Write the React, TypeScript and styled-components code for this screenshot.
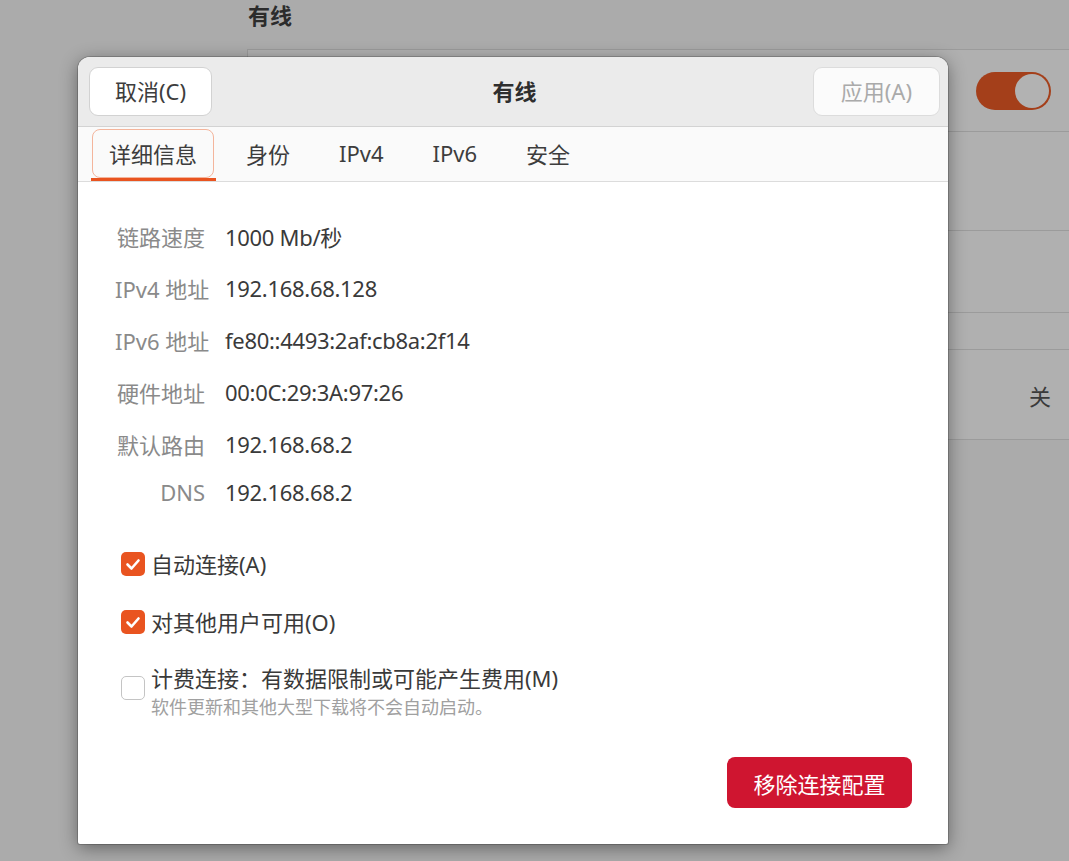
import React from "react";
import styled, { createGlobalStyle } from "styled-components";

const GlobalStyle = createGlobalStyle`
  html, body {
    margin: 0;
    padding: 0;
  }
  body {
    background: #ababab;
    font-family: "Noto Sans", "Noto Sans CJK SC", sans-serif;
    overflow: hidden;
  }
`;

const Desktop = styled.div`
  position: relative;
  width: 1069px;
  height: 861px;
  background: #ababab;
  overflow: hidden;
`;

// dimmed settings page behind the dialog
const Page = styled.div`
  display: flex;
  flex-direction: column;
  padding-left: 247px;
`;

const PageTitle = styled.div`
  height: 30px;
  line-height: 30px;
  padding-left: 1px;
  margin-bottom: 19px;
  font-size: 22px;
  font-weight: 700;
  color: #2c2c2c;
`;

const List = styled.div`
  width: 850px;
  background: #b0b0b0;
  border-top: 1px solid #9b9b9b;
  border-left: 1px solid #9b9b9b;
  display: flex;
  flex-direction: column;
`;

interface ListRowProps {
  h: number;
}
const ListRow = styled.div<ListRowProps>`
  height: ${p => p.h}px;
  border-bottom: 1px solid #9b9b9b;
  display: flex;
  align-items: center;
  justify-content: flex-end;
  padding-right: 47px;
  font-size: 22px;
  color: #3a3a3a;
`;

const Switch = styled.div`
  width: 75px;
  height: 38px;
  border-radius: 19px;
  background: #a43f1a;
  display: flex;
  align-items: center;
  justify-content: flex-end;
  padding: 0 2px;
  box-sizing: border-box;
`;

const Knob = styled.div`
  width: 34px;
  height: 34px;
  border-radius: 50%;
  background: #b2b2b2;
`;

// dialog
const Dialog = styled.div`
  position: absolute;
  left: 78px;
  top: 57px;
  width: 870px;
  height: 787px;
  background: #ffffff;
  border-radius: 12px 12px 2px 2px;
  box-shadow: 0 0 0 1px rgba(0, 0, 0, 0.18), 0 4px 18px rgba(0, 0, 0, 0.42);
  display: flex;
  flex-direction: column;
  overflow: hidden;
`;

const HeaderBar = styled.div`
  height: 69px;
  flex: none;
  background: #ebebeb;
  border-bottom: 1px solid #d3d3d3;
  display: grid;
  grid-template-columns: 1fr auto 1fr;
  align-items: center;
  padding: 0 8px 0 11px;
`;

const Title = styled.div`
  margin-top: -3px;
  font-size: 22px;
  font-weight: 700;
  color: #2e2e2e;
`;

interface HeaderButtonProps {
  disabled?: boolean;
  alignEnd?: boolean;
}
const HeaderButton = styled.button<HeaderButtonProps>`
  justify-self: ${p => (p.alignEnd ? "end" : "start")};
  height: 49px;
  margin-top: -1px;
  padding: 0 ${p => (p.disabled ? 27 : 25)}px;
  border-radius: 9px;
  border: 1px solid ${p => (p.disabled ? "#dcdcdc" : "#d2d2d2")};
  background: ${p => (p.disabled ? "#fbfbfb" : "#ffffff")};
  color: ${p => (p.disabled ? "#aaaaaa" : "#3d3d3d")};
  font-family: inherit;
  font-size: 22px;
  line-height: 1;
`;

const TabBar = styled.div`
  height: 54px;
  flex: none;
  background: #fafafa;
  border-bottom: 1px solid #dcdcdc;
  display: flex;
  align-items: flex-start;
  gap: 15px;
  padding-left: 14px;
`;

interface TabProps {
  active?: boolean;
}
const Tab = styled.div<TabProps>`
  position: relative;
  margin-top: 2px;
  height: 49px;
  box-sizing: border-box;
  padding: 0 16px 2px;
  border-radius: 8px;
  border: 1.5px solid ${p => (p.active ? "#f4b59c" : "transparent")};
  display: flex;
  align-items: center;
  font-size: 22px;
  color: #3d3d3d;

  &::after {
    content: "";
    display: ${p => (p.active ? "block" : "none")};
    position: absolute;
    left: -2px;
    right: -3px;
    top: 48px;
    height: 3px;
    background: #e95420;
  }
`;

const Body = styled.div`
  flex: 1;
  display: flex;
  flex-direction: column;
  padding: 28px 36px 36px 37px;
`;

const InfoGrid = styled.div`
  display: grid;
  grid-template-columns: 90px auto;
  grid-template-rows: repeat(5, 52px) 44px;
  column-gap: 20px;
  align-items: center;
  font-size: 22px;
`;

const InfoLabel = styled.div`
  text-align: right;
  white-space: nowrap;
  color: #8a8a8a;
`;

const InfoValue = styled.div`
  white-space: nowrap;
  letter-spacing: -0.3px;
  color: #3a3a3a;
`;

const CheckList = styled.div`
  display: flex;
  flex-direction: column;
  gap: 22px;
  margin-top: 32px;
  padding-left: 6px;
`;

const CheckRow = styled.label`
  display: flex;
  align-items: flex-start;
  gap: 6px;
`;

interface BoxProps {
  checked?: boolean;
  offset: number;
}
const CheckBox = styled.span<BoxProps>`
  flex: none;
  width: 24px;
  height: 24px;
  margin-top: ${p => p.offset}px;
  box-sizing: border-box;
  border-radius: 5px;
  background: ${p => (p.checked ? "#e95420" : "#ffffff")};
  border: ${p => (p.checked ? "none" : "1.5px solid #c4c4c4")};
  display: flex;
  align-items: center;
  justify-content: center;
`;

const CheckText = styled.div`
  display: flex;
  flex-direction: column;
`;

interface CheckLabelProps {
  lh: number;
}
const CheckLabel = styled.span<CheckLabelProps>`
  font-size: 22px;
  line-height: ${p => p.lh}px;
  color: #3a3a3a;
  white-space: nowrap;
`;

const CheckHint = styled.span`
  margin-top: 2px;
  font-size: 18px;
  line-height: 22px;
  color: #a0a0a0;
  white-space: nowrap;
`;

const DangerButton = styled.button`
  margin-top: auto;
  align-self: flex-end;
  width: 185px;
  height: 51px;
  border: none;
  border-radius: 8px;
  background: #cf1530;
  color: #ffffff;
  font-family: inherit;
  font-size: 22px;
`;

const Tick = () => (
  <svg width="24" height="24" viewBox="0 0 24 24">
    <polyline
      points="6.5,12.5 10.5,16.5 17.5,8.5"
      fill="none"
      stroke="#ffffff"
      strokeWidth="2.6"
      strokeLinecap="round"
      strokeLinejoin="round"
    />
  </svg>
);

const info = [
  ["链路速度", "1000 Mb/秒"],
  ["IPv4 地址", "192.168.68.128"],
  ["IPv6 地址", "fe80::4493:2af:cb8a:2f14"],
  ["硬件地址", "00:0C:29:3A:97:26"],
  ["默认路由", "192.168.68.2"],
  ["DNS", "192.168.68.2"]
];

const tabs = ["详细信息", "身份", "IPv4", "IPv6", "安全"];

export default function App() {
  return (
    <>
      <GlobalStyle />
      <Desktop>
        <Page>
          <PageTitle>有线</PageTitle>
          <List>
            <ListRow h={81}>
              <Switch>
                <Knob />
              </Switch>
            </ListRow>
            <ListRow h={98} />
            <ListRow h={81} />
            <ListRow h={36} />
            <ListRow h={89}>关</ListRow>
          </List>
        </Page>

        <Dialog>
          <HeaderBar>
            <HeaderButton>取消(C)</HeaderButton>
            <Title>有线</Title>
            <HeaderButton disabled alignEnd>
              应用(A)
            </HeaderButton>
          </HeaderBar>

          <TabBar>
            {tabs.map((t, i) => (
              <Tab key={t} active={i === 0}>
                {t}
              </Tab>
            ))}
          </TabBar>

          <Body>
            <InfoGrid>
              {info.map(([label, value]) => (
                <React.Fragment key={label}>
                  <InfoLabel>{label}</InfoLabel>
                  <InfoValue>{value}</InfoValue>
                </React.Fragment>
              ))}
            </InfoGrid>

            <CheckList>
              <CheckRow>
                <CheckBox checked offset={6}>
                  <Tick />
                </CheckBox>
                <CheckLabel lh={36}>自动连接(A)</CheckLabel>
              </CheckRow>
              <CheckRow>
                <CheckBox checked offset={6}>
                  <Tick />
                </CheckBox>
                <CheckLabel lh={36}>对其他用户可用(O)</CheckLabel>
              </CheckRow>
              <CheckRow>
                <CheckBox offset={14} />
                <CheckText>
                  <CheckLabel lh={32}>计费连接：有数据限制或可能产生费用(M)</CheckLabel>
                  <CheckHint>软件更新和其他大型下载将不会自动启动。</CheckHint>
                </CheckText>
              </CheckRow>
            </CheckList>

            <DangerButton>移除连接配置</DangerButton>
          </Body>
        </Dialog>
      </Desktop>
    </>
  );
}
